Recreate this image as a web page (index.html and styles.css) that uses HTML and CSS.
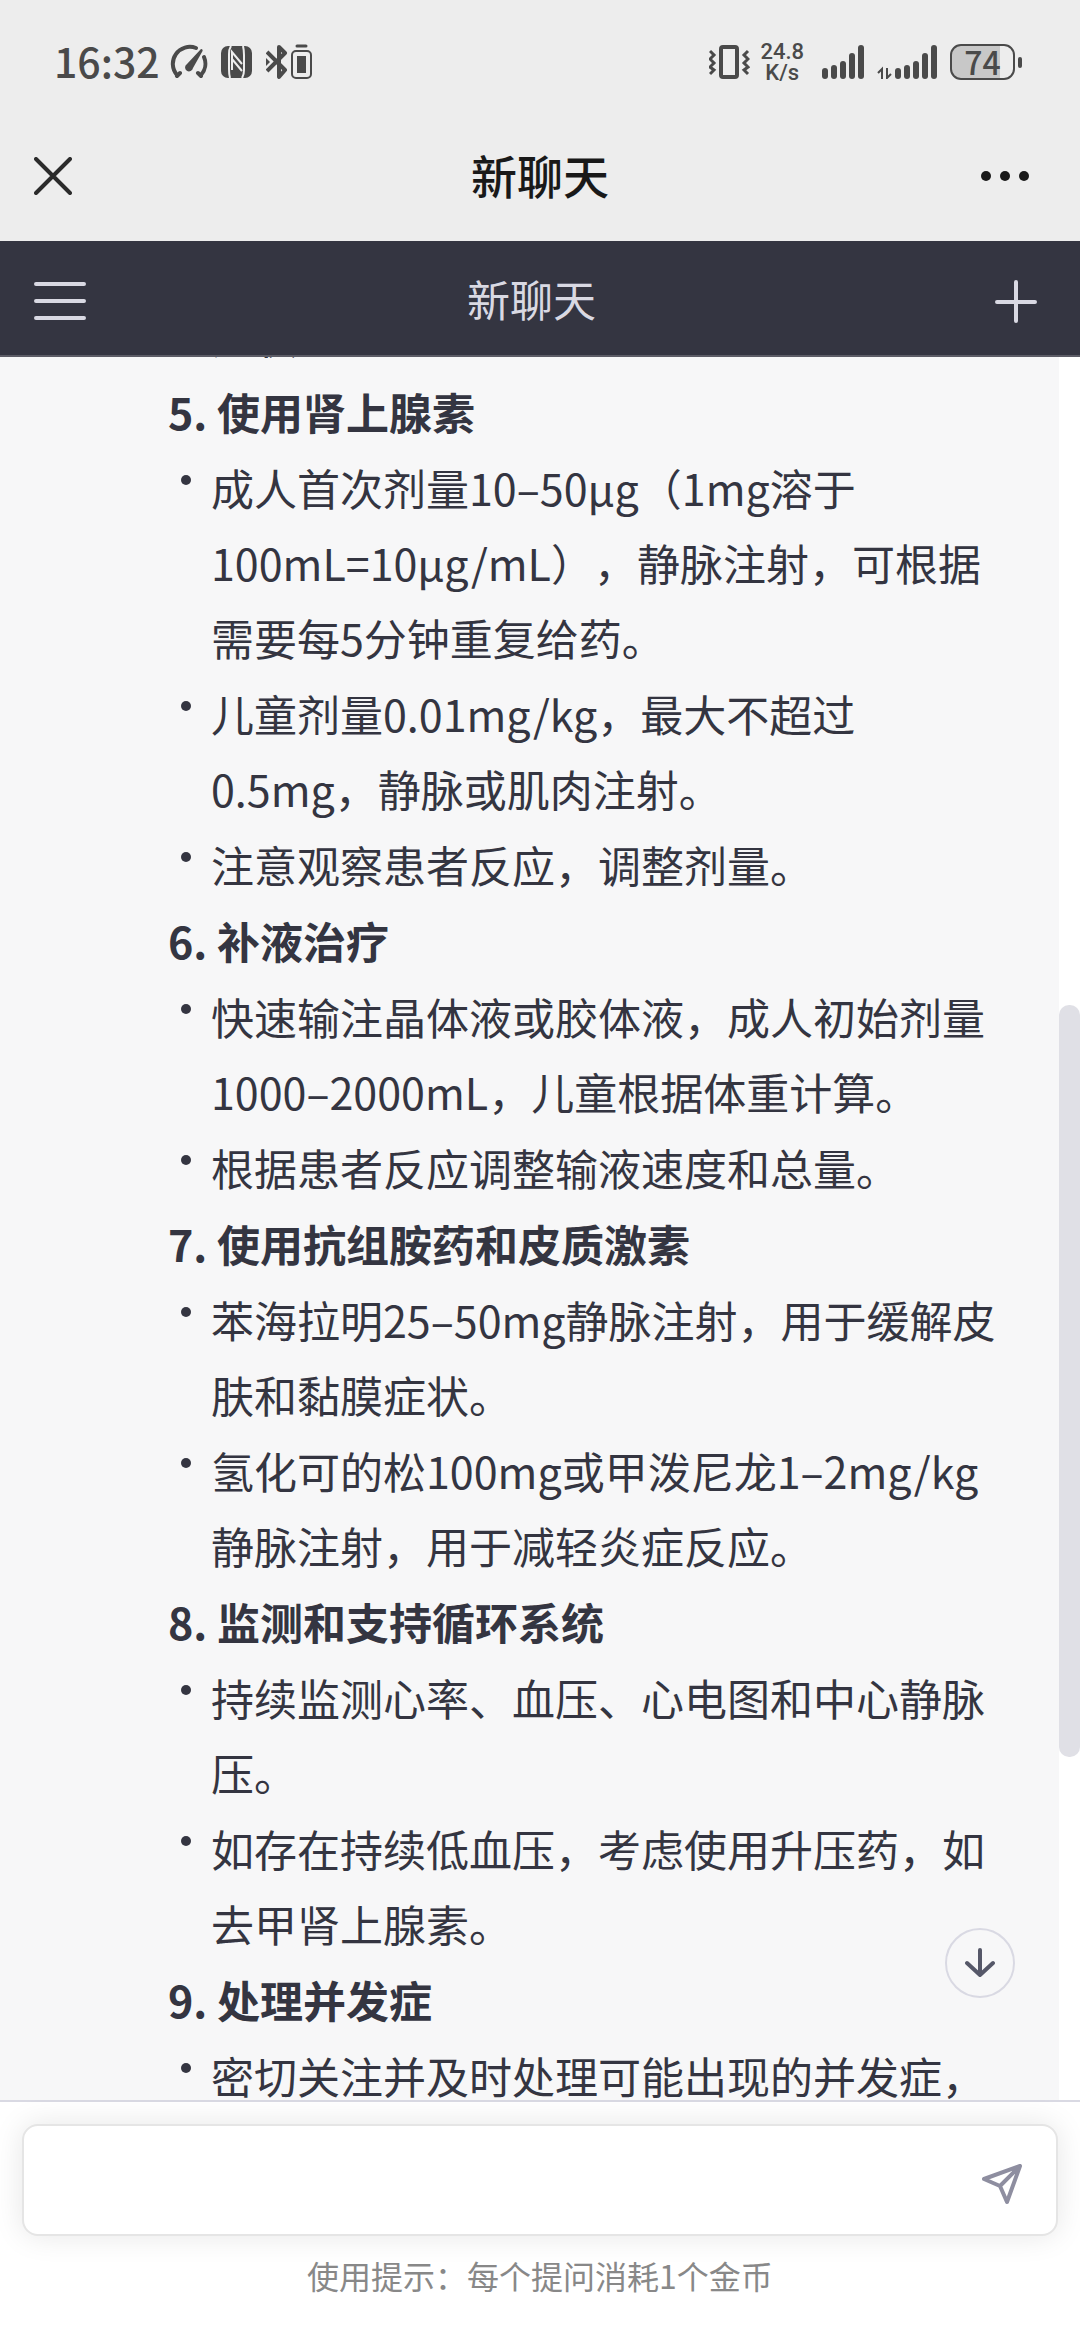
FILE: index.html
```html
<!DOCTYPE html>
<html lang="zh-CN">
  <head>
    <meta charset="UTF-8" />
    <meta name="viewport" content="width=device-width, initial-scale=1.0" />
    <title>新聊天</title>
    <link rel="stylesheet" href="styles.css">
  </head>
  <body>
    <div class="status">
      <div class="status__left">
        <span class="status__time">16:32</span>
        <svg width="40" height="36" viewBox="0 0 40 36" fill="none" stroke="#4a4a4a" stroke-width="4" stroke-linecap="round">
          <path d="M8 31A17 17 0 0 1 27 4M35 13a17 17 0 0 1-3 18M8 32l3-3M32 32l-3-3"/>
          <path d="M32 5c2 0 2 2 1 3L24 24a4 4 0 1 1-6-4z" fill="#4a4a4a" stroke="none"/>
        </svg>
        <svg class="nfc" width="31" height="32" viewBox="0 0 31 32">
          <rect width="31" height="32" rx="7" fill="#4a4a4a"/>
          <path d="M10 0q-2 3-2 8v15q0 5 1 9M21 32q2-3 2-8V9q0-5-1-9" fill="none" stroke="#ededed" stroke-width="2"/>
          <path d="M11 24V6l10 12M11 13l10 12" fill="none" stroke="#ededed" stroke-width="2"/>
        </svg>
        <svg width="46" height="36" viewBox="0 0 46 36" fill="none" stroke="#4a4a4a">
          <path d="M1 8l18 18-6 7V3l6 6L1 27" stroke-width="4" stroke-linejoin="round"/>
          <path d="M0 14l4 4-4 4z" fill="#4a4a4a" stroke="none"/>
          <path d="M31 2h9" stroke-width="3" stroke-linecap="round"/>
          <rect x="26" y="7" width="19" height="27" rx="4" stroke-width="2"/>
          <rect x="31" y="12" width="9" height="17" fill="#4a4a4a" stroke="none"/>
        </svg>
      </div>
      <div class="status__right">
        <svg width="41" height="36" viewBox="0 0 41 36" fill="none" stroke="#4a4a4a">
          <rect x="12" y="3" width="16" height="30" rx="2" stroke-width="4"/>
          <path d="M1 7l4 4-4 4 4 4-4 4 4 3-4 4M39 7l-4 4 4 4-4 4 4 4-4 3 4 4" stroke-width="3"/>
        </svg>
        <div class="speed"><span>24.8</span><span>K/s</span></div>
        <svg width="42" height="34" viewBox="0 0 42 34" fill="#4a4a4a">
          <rect y="23" width="6" height="11" rx="3"/>
          <rect x="9" y="20" width="6" height="14" rx="3"/>
          <rect x="18" y="16" width="6" height="18" rx="3"/>
          <rect x="27" y="8" width="6" height="26" rx="3"/>
          <rect x="36" width="6" height="34" rx="3"/>
        </svg>
        <svg class="signal-data" width="60" height="34" viewBox="0 0 60 34" fill="#4a4a4a">
          <path d="M5 34V24l-4 4M10 23v10l4-4" fill="none" stroke="#4a4a4a" stroke-width="2"/>
          <rect x="18" y="23" width="6" height="11" rx="3"/>
          <rect x="27" y="20" width="6" height="14" rx="3"/>
          <rect x="36" y="16" width="6" height="18" rx="3"/>
          <rect x="45" y="8" width="6" height="26" rx="3"/>
          <rect x="54" width="6" height="34" rx="3"/>
        </svg>
        <div class="battery">74</div>
      </div>
    </div>

    <header class="titlebar">
      <button class="icon-btn" aria-label="关闭">
        <svg width="38" height="38" viewBox="0 0 38 38" stroke="#2b2b2b" stroke-width="4" stroke-linecap="round">
          <path d="M2 2l34 34M36 2L2 36"/>
        </svg>
      </button>
      <h1 class="titlebar__title">新聊天</h1>
      <button class="icon-btn" aria-label="更多">
        <svg width="50" height="12" viewBox="0 0 50 12" fill="#191919">
          <circle cx="6" cy="6" r="5"/><circle cx="25" cy="6" r="5"/><circle cx="44" cy="6" r="5"/>
        </svg>
      </button>
    </header>

    <nav class="chatbar">
      <button class="icon-btn" aria-label="打开菜单">
        <svg width="54" height="40" viewBox="0 0 54 40" stroke="#d9d9e3" stroke-width="4" stroke-linecap="round">
          <path d="M3 3h48M3 20h48M3 37h48"/>
        </svg>
      </button>
      <h2 class="chatbar__title">新聊天</h2>
      <button class="icon-btn" aria-label="新建聊天">
        <svg width="44" height="44" viewBox="0 0 44 44" stroke="#d9d9e3" stroke-width="4" stroke-linecap="round">
          <path d="M22 3v39M3 23h38"/>
        </svg>
      </button>
    </nav>

    <main class="chat">
      <article class="answer">
        <ul class="steps">
          <li>症状。</li>
        </ul>
        <h3>5. 使用肾上腺素</h3>
        <ul class="steps">
          <li>成人首次剂量10–50µg（1mg溶于100mL=10µg/mL），静脉注射，可根据需要每5分钟重复给药。</li>
          <li>儿童剂量0.01mg/kg，最大不超过0.5mg，静脉或肌肉注射。</li>
          <li>注意观察患者反应，调整剂量。</li>
        </ul>
        <h3>6. 补液治疗</h3>
        <ul class="steps">
          <li>快速输注晶体液或胶体液，成人初始剂量1000–2000mL，儿童根据体重计算。</li>
          <li>根据患者反应调整输液速度和总量。</li>
        </ul>
        <h3>7. 使用抗组胺药和皮质激素</h3>
        <ul class="steps">
          <li>苯海拉明25–50mg静脉注射，用于缓解皮肤和黏膜症状。</li>
          <li>氢化可的松100mg或甲泼尼龙1–2mg/kg静脉注射，用于减轻炎症反应。</li>
        </ul>
        <h3>8. 监测和支持循环系统</h3>
        <ul class="steps">
          <li>持续监测心率、血压、心电图和中心静脉压。</li>
          <li>如存在持续低血压，考虑使用升压药，如去甲肾上腺素。</li>
        </ul>
        <h3>9. 处理并发症</h3>
        <ul class="steps">
          <li>密切关注并及时处理可能出现的并发症，</li>
        </ul>
      </article>
      <div class="scrollbar"><div class="scrollbar__thumb"></div></div>
      <button class="to-bottom" aria-label="滚动到底部">
        <svg width="30" height="30" viewBox="0 0 30 30" fill="none" stroke="#565869" stroke-width="4" stroke-linecap="round" stroke-linejoin="round">
          <path d="M15 2v25M2 15l13 12 13-12"/>
        </svg>
      </button>
    </main>

    <footer class="composer">
      <form class="composer__box">
        <input type="text" class="composer__input" aria-label="输入消息" autocomplete="off">
        <button type="button" class="icon-btn" aria-label="发送">
          <svg width="42" height="42" viewBox="0 0 42 42" fill="none" stroke="#8e8ea0" stroke-width="4" stroke-linejoin="round">
            <path d="M39 3L3 16l16 7 7 16zM39 3L19 23"/>
          </svg>
        </button>
      </form>
      <p class="composer__tip">使用提示：每个提问消耗1个金币</p>
    </footer>
  </body>
</html>
```

FILE: styles.css
```css
* {
  margin: 0;
  padding: 0;
  box-sizing: border-box;
}
body {
  display: flex;
  flex-direction: column;
  height: 100vh;
  overflow: hidden;
  font-family: "Noto Sans CJK SC", sans-serif;
  font-size: 43px;
  color: #343541;
  background-color: #fff;
  text-spacing-trim: space-all;
}
svg {
  display: block;
  flex: none;
}
button {
  border: none;
  background: none;
  cursor: pointer;
}

/* status bar */
.status {
  display: flex;
  justify-content: space-between;
  align-items: center;
  height: 124px;
  padding: 0 65px 0 54px;
  background-color: #ededed;
  color: #4a4a4a;
}
.status__left,
.status__right {
  display: flex;
  align-items: center;
}
.status__time {
  margin-right: 9px;
  padding-bottom: 4px;
  font-size: 41px;
  font-weight: 500;
  line-height: 48px;
}
.nfc {
  margin: 0 14px 0 12px;
}
.speed {
  display: flex;
  flex-direction: column;
  align-items: center;
  margin: 0 18px 0 10px;
  font-family: Roboto, sans-serif;
  font-size: 22px;
  font-weight: 500;
  line-height: 21px;
}
.signal-data {
  margin: 0 13px;
}
.battery {
  position: relative;
  width: 65px;
  height: 36px;
  border: 2px solid #4a4a4a;
  border-radius: 11px;
  background: linear-gradient(to right, #c8c8c8 78%, #ededed 78%);
  font-size: 32px;
  font-weight: 500;
  line-height: 30px;
  text-align: center;
}
.battery::after {
  content: "";
  position: absolute;
  top: 11px;
  right: -9px;
  width: 4px;
  height: 11px;
  border-radius: 2px;
  background-color: #4a4a4a;
}

/* bars */
.titlebar,
.chatbar {
  display: flex;
  align-items: center;
  text-align: center;
}
.icon-btn {
  display: flex;
}
.titlebar {
  height: 117px;
  padding: 0 50px 14px 34px;
  background-color: #ededed;
}
.titlebar .icon-btn:first-child {
  padding-right: 28px;
}
.titlebar__title {
  flex: 1;
  font-size: 46px;
  font-weight: 500;
  line-height: 56px;
  padding-bottom: 4px;
  color: #191919;
}
.chatbar {
  height: 116px;
  padding: 0 42px 0 33px;
  border-bottom: 2px solid #5c5c66;
  background-color: #343541;
}
.chatbar .icon-btn {
  padding-top: 6px;
}
.chatbar .icon-btn:last-child {
  padding-left: 18px;
}
.chatbar__title {
  flex: 1;
  font-size: 43px;
  font-weight: 400;
  color: #d9d9e3;
}

/* conversation */
.chat {
  position: relative;
  display: flex;
  flex: 1;
  min-height: 0;
}
.answer {
  display: flex;
  flex-direction: column;
  gap: 1px;
  flex: 1;
  overflow: hidden;
  padding: 0 48px 0 168px;
  background-color: #f7f7f8;
  line-height: 75px;
}
.answer h3 {
  font-size: 43px;
  font-weight: 700;
}
.steps {
  display: flex;
  flex-direction: column;
  gap: 1px;
  list-style: none;
  padding-left: 43px;
}
.steps:first-child {
  margin-top: -59px;
}
.steps li {
  position: relative;
}
.steps li::before {
  content: "";
  position: absolute;
  top: 25px;
  left: -30px;
  width: 10px;
  height: 10px;
  border-radius: 50%;
  background-color: #343541;
}
.scrollbar {
  width: 21px;
  background-color: #fff;
}
.scrollbar__thumb {
  position: relative;
  top: 37.2%;
  height: 43.1%;
  border-radius: 10px;
  background-color: #e0e0e6;
}
.to-bottom {
  position: absolute;
  right: 65px;
  bottom: 102px;
  display: flex;
  justify-content: center;
  align-items: center;
  width: 70px;
  height: 70px;
  border: 2px solid #d9d9e3;
  border-radius: 50%;
  background-color: #f7f7f8;
}

/* composer */
.composer {
  padding: 22px 22px 32px;
  border-top: 2px solid #d9d9e3;
  background-color: #fff;
}
.composer__box {
  display: flex;
  align-items: center;
  height: 112px;
  padding: 0 33px;
  border: 2px solid #e5e5e5;
  border-radius: 16px;
  background-color: #fff;
  box-shadow: 0 0 30px rgba(0, 0, 0, 0.1);
}
.composer__input {
  flex: 1;
  height: 100%;
  border: none;
  outline: none;
  background: none;
  font: inherit;
  color: inherit;
}
.composer__box .icon-btn {
  padding-top: 8px;
}
.composer__tip {
  margin-top: 15px;
  font-size: 32px;
  line-height: 48px;
  text-align: center;
  color: #888;
}
```
